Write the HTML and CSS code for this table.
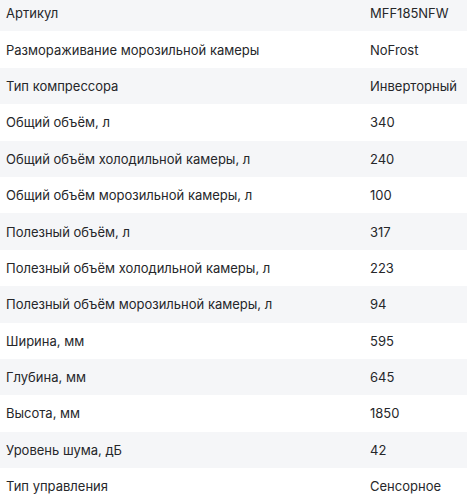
FILE: index.html
```html
<!DOCTYPE html>
<html lang="ru">
<head>
<meta charset="utf-8">
<link rel="stylesheet" href="styles.css">
</head>
<body>
<div class="specs">
  <div class="row"><span class="label">Артикул</span><span class="value">MFF185NFW</span></div>
  <div class="row"><span class="label">Размораживание морозильной камеры</span><span class="value">NoFrost</span></div>
  <div class="row"><span class="label">Тип компрессора</span><span class="value">Инверторный</span></div>
  <div class="row"><span class="label">Общий объём, л</span><span class="value">340</span></div>
  <div class="row"><span class="label">Общий объём холодильной камеры, л</span><span class="value">240</span></div>
  <div class="row"><span class="label">Общий объём морозильной камеры, л</span><span class="value">100</span></div>
  <div class="row"><span class="label">Полезный объём, л</span><span class="value">317</span></div>
  <div class="row"><span class="label">Полезный объём холодильной камеры, л</span><span class="value">223</span></div>
  <div class="row"><span class="label">Полезный объём морозильной камеры, л</span><span class="value">94</span></div>
  <div class="row"><span class="label">Ширина, мм</span><span class="value">595</span></div>
  <div class="row"><span class="label">Глубина, мм</span><span class="value">645</span></div>
  <div class="row"><span class="label">Высота, мм</span><span class="value">1850</span></div>
  <div class="row"><span class="label">Уровень шума, дБ</span><span class="value">42</span></div>
  <div class="row"><span class="label">Тип управления</span><span class="value">Сенсорное</span></div>
</div>
</body>
</html>
```
FILE: styles.css
```css
html, body {
  margin: 0;
  padding: 0;
  background: #ffffff;
}
body {
  font-family: Inter, "Noto Sans", sans-serif;
  font-size: 13px;
  color: #26272a;
  overflow: hidden;
}
.specs {
  margin-top: -5px;
}
.row {
  display: grid;
  grid-template-columns: 364px 1fr;
  align-items: center;
  height: 36.4px;
  padding-left: 6px;
}
.row:nth-child(odd) {
  background: #f5f6f8;
}
```
